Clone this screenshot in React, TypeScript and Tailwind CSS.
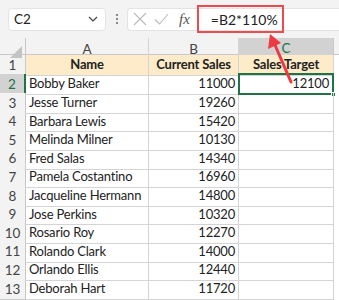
import React from "react";

const rows: [string, number][] = [
  ["Bobby Baker", 11000],
  ["Jesse Turner", 19260],
  ["Barbara Lewis", 15420],
  ["Melinda Milner", 10130],
  ["Fred Salas", 14340],
  ["Pamela Costantino", 16960],
  ["Jacqueline Hermann", 14800],
  ["Jose Perkins", 10320],
  ["Rosario Roy", 12270],
  ["Rolando Clark", 14000],
  ["Orlando Ellis", 12440],
  ["Deborah Hart", 11720],
];

const cols = "grid grid-cols-[26px_123px_90px_95px_5px]";

export default function App() {
  return (
    <div className="w-[339px] h-[300px] bg-white overflow-hidden relative whitespace-nowrap text-[#222] font-['Lato','Open_Sans',sans-serif]">
      {/* Formula bar */}
      <div className="h-[38px] bg-[#f3f3f3] flex items-center pl-2 gap-0">
        <div className="w-[98px] h-[23px] bg-white rounded-[4px] border border-[#e3e3e3] flex items-center justify-between px-[5px]">
          <span className="text-[13.5px]">C2</span>
          <svg width="10" height="6" viewBox="0 0 10 6" className="mr-[2px]">
            <path d="M1 1l4 4 4-4" fill="none" stroke="#444" strokeWidth="1.2" />
          </svg>
        </div>
        <div className="w-[21px] flex flex-col items-center gap-[2px]">
          <span className="w-[2px] h-[2px] bg-[#888]" />
          <span className="w-[2px] h-[2px] bg-[#888]" />
          <span className="w-[2px] h-[2px] bg-[#888]" />
        </div>
        <div className="flex-1 h-[23px] bg-white rounded-l-[4px] border border-r-0 border-[#e3e3e3] flex items-center">
          <svg width="14" height="14" viewBox="0 0 14 14" className="ml-[5px]">
            <path d="M1 1l12 12M13 1L1 13" stroke="#bbb" strokeWidth="1.1" />
          </svg>
          <svg width="15" height="12" viewBox="0 0 15 12" className="ml-[7px]">
            <path d="M1 6.5l4.5 4.5L14 1" fill="none" stroke="#bbb" strokeWidth="1.1" />
          </svg>
          <span className="ml-[10px] text-[15px] italic text-[#555] font-['Liberation_Serif',serif]">fx</span>
          <div className="ml-[7px] w-[87px] h-[28px] border-[2.5px] border-[#ee4a4f] flex items-center pl-[12px] text-[14px]">
            =B2*110%
          </div>
        </div>
      </div>

      {/* Column headers */}
      <div className={`${cols} h-[17px] bg-[#f3f3f3] border-b border-[#c8c8c8] text-[13.5px] text-[#444]`}>
        <div className="border-r border-[#c8c8c8] relative">
          <div className="absolute right-[3px] bottom-[2px] w-0 h-0 border-l-[12px] border-l-transparent border-b-[12px] border-b-[#c4c4c4]" />
        </div>
        <div className="border-r border-[#d6d6d6] flex items-center justify-center">A</div>
        <div className="border-r border-[#d6d6d6] flex items-center justify-center">B</div>
        <div className="bg-[#d2d2d2] border-b-2 border-[#217346] border-r border-r-[#c8c8c8] flex items-center justify-center text-[#217346]">C</div>
        <div />
      </div>

      {/* Row 1 */}
      <div className={`${cols} h-[19px] text-[13px] tracking-[-0.2px]`}>
        <div className="bg-[#f3f3f3] border-r border-b border-[#c8c8c8] flex items-center justify-center text-[#444] tracking-normal text-[13.5px]">1</div>
        <div className="bg-[#fdebc9] border-r border-b border-[#d4d4d4] flex items-center justify-center font-bold">Name</div>
        <div className="bg-[#fdebc9] border-r border-b border-[#d4d4d4] flex items-center justify-center font-bold">Current Sales</div>
        <div className="bg-[#fdebc9] border-r border-b border-[#d4d4d4] flex items-center justify-center font-bold">Sales Target</div>
        <div />
      </div>

      {rows.map(([name, sales], i) => {
        const sel = i === 0;
        return (
          <div key={name} className={`${cols} h-[18.6px] text-[13px] tracking-[-0.2px]`}>
            <div
              className={`border-b border-[#c8c8c8] flex items-center justify-center text-[13.5px] tracking-normal ${
                sel ? "bg-[#d2d2d2] border-r-2 border-r-[#217346] text-[#217346]" : "bg-[#f3f3f3] border-r border-r-[#c8c8c8] text-[#444]"
              }`}
            >
              {i + 2}
            </div>
            <div className="border-r border-b border-[#d4d4d4] flex items-center pl-[3px] overflow-hidden">{name}</div>
            <div className="border-r border-b border-[#d4d4d4] flex items-center justify-end pr-[3px]">{sales}</div>
            <div className="border-r border-b border-[#d4d4d4] flex items-center justify-end pr-[4px] relative">
              {sel && (
                <>
                  <div className="absolute -left-px -top-px right-[-1px] bottom-[-1px] border-2 border-[#217346]" />
                  <div className="absolute right-[-3px] bottom-[-3px] w-[5px] h-[5px] bg-[#217346] border border-white" />
                  <span className="relative">12100</span>
                </>
              )}
            </div>
            <div />
          </div>
        );
      })}

      {/* Red arrow annotation */}
      <svg className="absolute left-0 top-0 pointer-events-none" width="339" height="300">
        <line x1="291" y1="82" x2="275" y2="45" stroke="#ee3a42" strokeWidth="3" strokeLinecap="round" />
        <polygon points="270,34 268,49 281,43" fill="#ee3a42" />
      </svg>
    </div>
  );
}
